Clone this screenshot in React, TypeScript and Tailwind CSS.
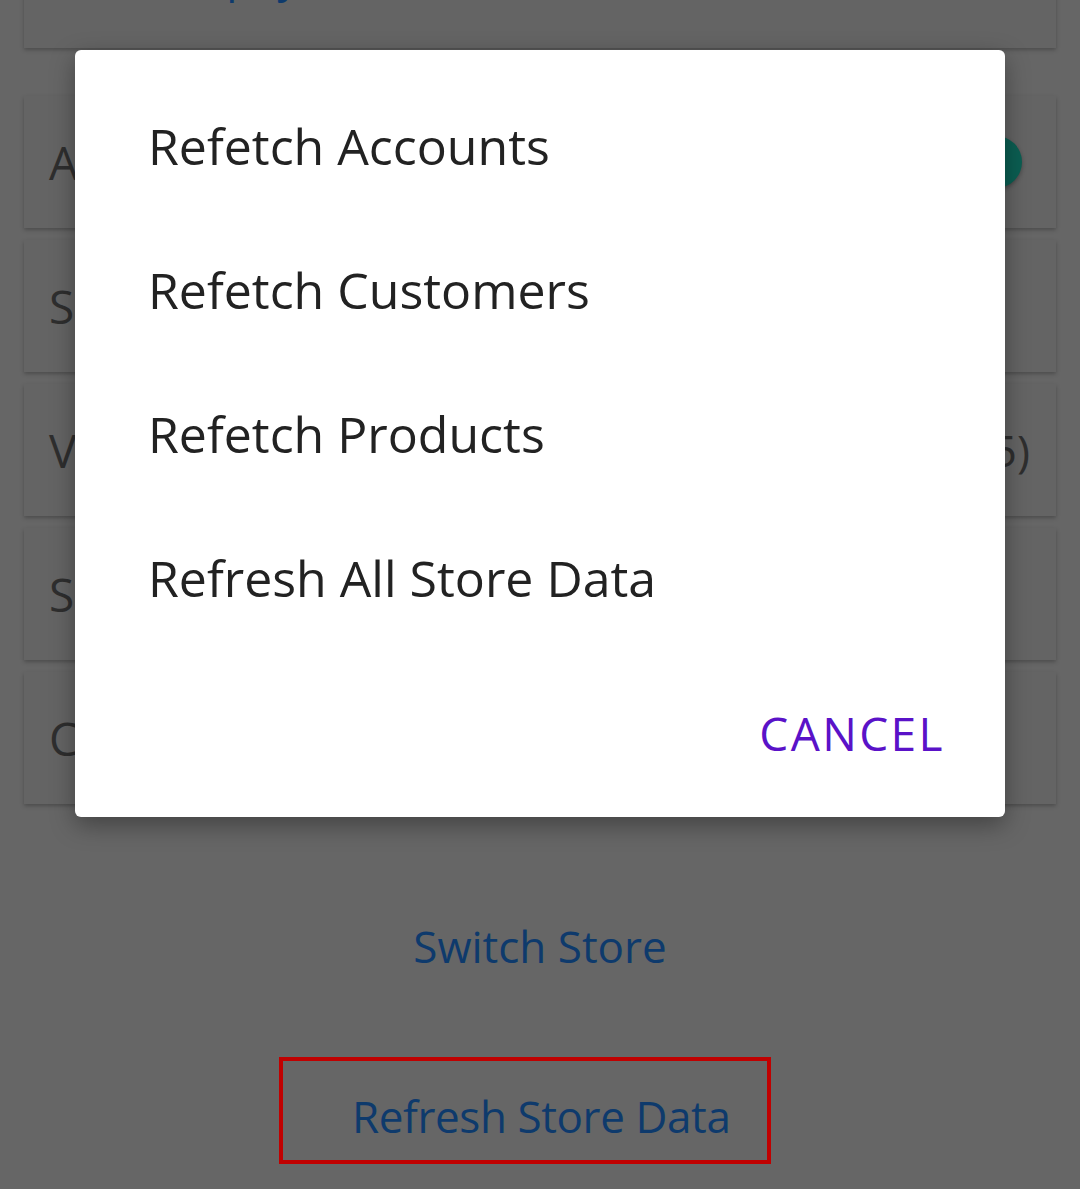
import React from "react";

const font = { fontFamily: '"Open Sans", "Noto Sans", sans-serif' };

function Card({ left, right, extra = "" }: { left?: string; right?: React.ReactNode; extra?: string }) {
  return (
    <div className={`h-[132px] bg-[#646464] shadow-[0_2px_4px_rgba(0,0,0,0.25)] flex items-center justify-between pl-[25px] ${extra}`}>
      <span className="text-[46px] text-[#2e2e2e]">{left}</span>
      {right}
    </div>
  );
}

export default function App() {
  const items = ["Refetch Accounts", "Refetch Customers", "Refetch Products", "Refresh All Store Data"];
  return (
    <div className="relative w-[1080px] h-[1189px] bg-[#666666] overflow-hidden" style={font}>
      <div className="flex flex-col px-[24px] gap-[12px] -mt-[84px]">
        <div className="h-[132px] bg-[#646464] shadow-[0_2px_4px_rgba(0,0,0,0.25)] flex items-end pl-[133px]">
          <span className="text-[44px] text-[#0e3a6c] leading-none mb-[51px]">Prepay</span>
        </div>
        <Card
          extra="mt-[36px] pr-[34px]"
          left="A"
          right={<div className="w-[52px] h-[52px] rounded-full bg-[#0b5e52] shadow-[0_2px_4px_rgba(0,0,0,0.3)]" />}
        />
        <Card left="S" extra="pr-[34px]" />
        <Card left="V" extra="pr-[26px]" right={<span className="text-[44px] text-[#2e2e2e]">(5)</span>} />
        <Card left="S" extra="pr-[34px]" />
        <Card left="C" extra="pr-[34px]" />
        <div className="flex flex-col items-center mt-[108px]">
          <span className="text-[44px] text-[#0e3a6c] leading-none">Switch Store</span>
          <div className="mt-[89px] mr-[30px] w-[492px] h-[107px] border-[4px] border-[#c00000] flex items-start justify-start pl-[69px] pt-[33px]">
            <span className="text-[44px] text-[#0e3a6c] leading-none tracking-[-0.4px]">Refresh Store Data</span>
          </div>
        </div>
      </div>

      <div className="absolute left-[75px] top-[50px] w-[930px] h-[767px] bg-white rounded-[6px] shadow-[0_8px_24px_rgba(0,0,0,0.35)] flex flex-col">
        <div className="flex flex-col pt-[24px]">
          {items.map((t) => (
            <div key={t} className="h-[144px] flex items-center pl-[73px]">
              <span className="text-[50px] text-[#222222] leading-none">{t}</span>
            </div>
          ))}
        </div>
        <div className="flex justify-end pr-[60px] mt-[60px]">
          <span className="text-[46px] tracking-[2.4px] text-[#5a12c8] leading-none">CANCEL</span>
        </div>
      </div>
    </div>
  );
}
